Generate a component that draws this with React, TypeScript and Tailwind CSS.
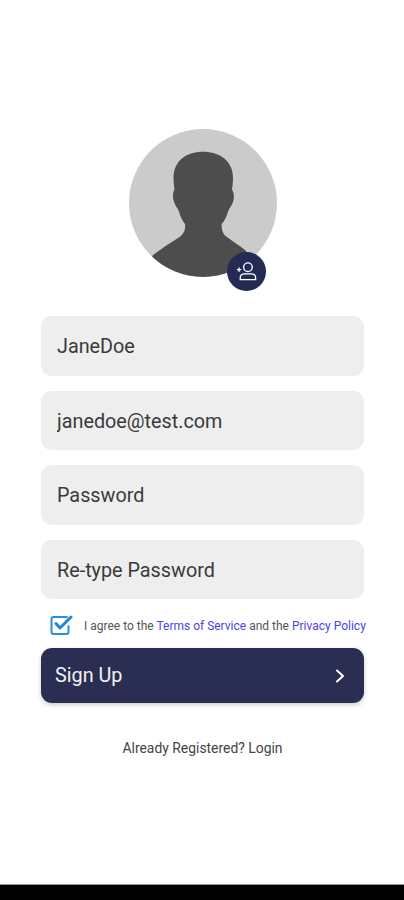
import React from "react";

const fields = ["JaneDoe", "janedoe@test.com", "Password", "Re-type Password"];

const Avatar = () => (
  <div className="relative ml-[1px] w-[148px] h-[148px]">
    <svg viewBox="0 0 148 148" className="w-full h-full">
      <defs>
        <clipPath id="avatarClip">
          <circle cx="74" cy="74" r="74" />
        </clipPath>
      </defs>
      <circle cx="74" cy="74" r="74" fill="#cbcbcb" />
      <path
        clipPath="url(#avatarClip)"
        fill="#4d4d4d"
        d="M74 22.700C57 22.700 44.500 32 44.500 49C44.500 53 45 57 45.500 60.500C43.500 63.500 43.500 69 45 73C46.500 77 48.500 79 50 82.500C51 87 53.500 92 56 95C56.500 101 55 105 50.500 108C43 113 33 119 24 126L10 148H138L116 121C110 116 103 112 98 108C93.500 105 92.500 100 92.700 95C95.500 92 98 87 99 82.500C100.500 79 102.500 77 104 73C105.500 69 105 63.500 103 60.500C103.500 57 104 53 104 49C104 32 91 22.700 74 22.700Z"
      />
    </svg>
    <div className="absolute left-[98px] top-[123px] w-[39px] h-[39px] rounded-full bg-[#232b55] flex items-center justify-center">
      <svg viewBox="0 0 24 24" className="w-[23px] h-[23px]" fill="none" stroke="#ffffff" strokeWidth="1.400" strokeLinecap="round">
        <circle cx="13.500" cy="7.500" r="4.500" />
        <path d="M5.500 20.500V18.500C5.500 16 7.500 14.500 10 14.500H17C19.500 14.500 21.500 16 21.500 18.500V20.500Z" />
        <path d="M2.500 10H6M4.250 8.250V11.750" />
      </svg>
    </div>
  </div>
);

const CheckIcon = () => (
  <svg viewBox="0 0 23 20" className="w-[23px] h-[20px] shrink-0" fill="none" strokeLinecap="round" strokeLinejoin="round">
    <path d="M17 2H3.500C2.500 2 1.500 3 1.500 4V17C1.500 18 2.500 19 3.500 19H16.500C17.500 19 18.500 18 18.500 17V11" stroke="#2a8ce0" strokeWidth="2" />
    <path d="M6 8.500L10 13L21 2" stroke="#1f86dc" strokeWidth="3" />
  </svg>
);

export default function App() {
  return (
    <div className="h-[900px] flex flex-col bg-white font-['Roboto',sans-serif]">
      <div className="flex-1 flex flex-col items-center pt-[129px] pl-[41px] pr-[40px]">
        <Avatar />
        <div className="w-full mt-[39px] flex flex-col gap-[15px]">
          {fields.map((value) => (
            <input
              key={value}
              value={value}
              readOnly
              className="w-full h-[59.500px] rounded-[11px] bg-[#eeeeee] px-[16px] pt-[2px] text-[19.800px] text-[#3a3a3a] outline-none"
            />
          ))}
        </div>
        <div className="w-full mt-[16px] h-[20px] flex items-center pl-[9px] whitespace-nowrap">
          <CheckIcon />
          <span className="ml-[11px] pt-[1px] text-[12px] text-[#555555]">
            I agree to the <span className="text-[#4a46e8]">Terms of Service</span> and the{" "}
            <span className="text-[#4a46e8]">Privacy Policy</span>
          </span>
        </div>
        <button className="w-full h-[55px] mt-[13px] rounded-[11px] bg-[#2a2e52] pl-[14px] pr-[14px] flex items-center justify-between text-[#f2f2f2] shadow-[0_2px_5px_rgba(0,0,0,0.2)]">
          <span className="pt-[1px] text-[19.800px]">Sign Up</span>
          <svg viewBox="0 0 12 16" className="w-[12px] h-[16px] mr-[4px]" fill="none" stroke="#ffffff" strokeWidth="2" strokeLinecap="round" strokeLinejoin="round">
            <path d="M3 2.500L9 8L3 13.500" />
          </svg>
        </button>
        <p className="mt-[35px] text-[13.900px] text-[#444444]">Already Registered? Login</p>
      </div>
      <div className="h-[16px] bg-black border-t border-[#999999]" />
    </div>
  );
}
